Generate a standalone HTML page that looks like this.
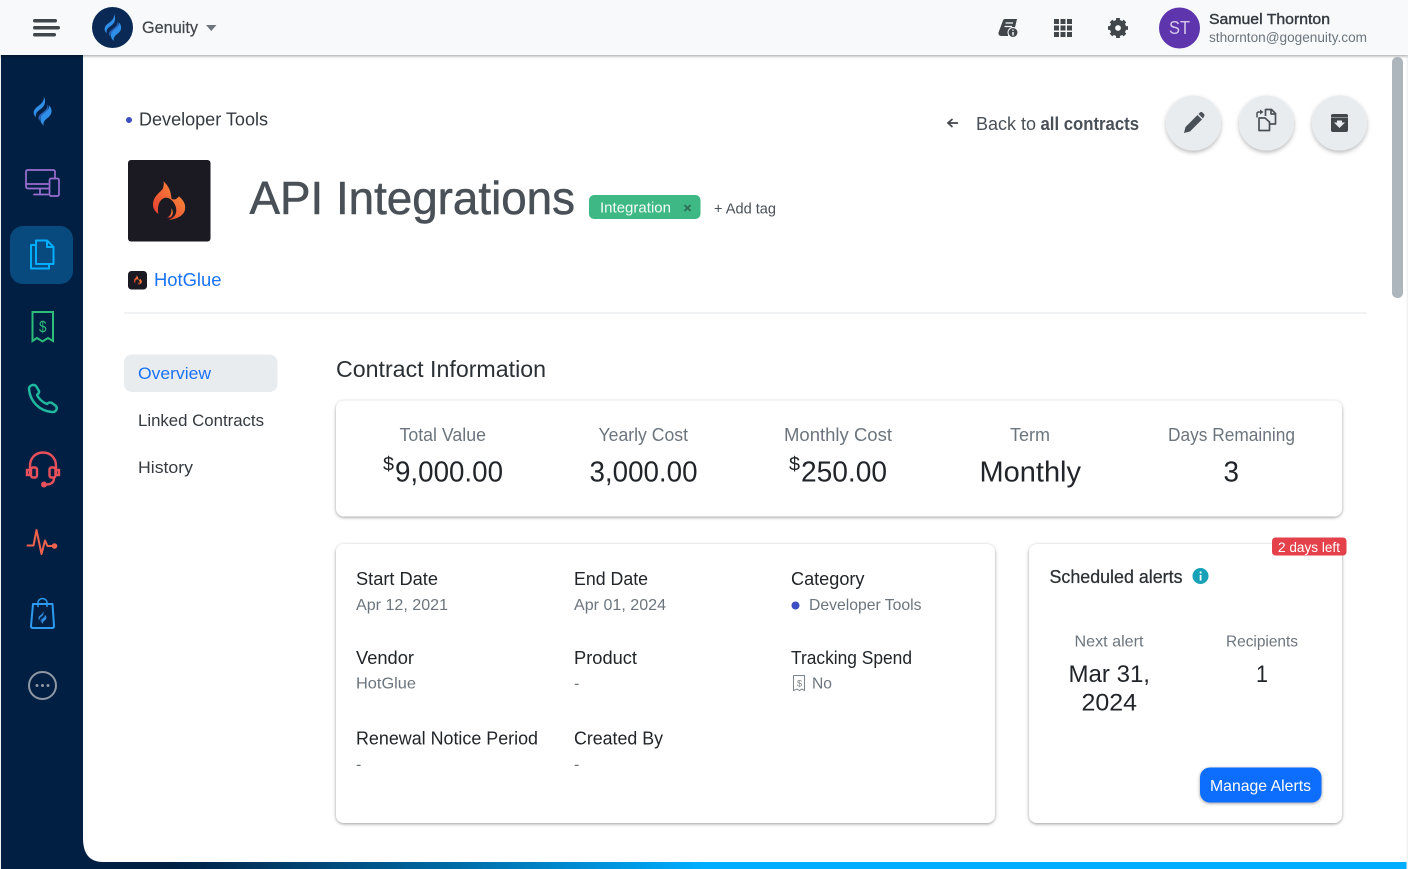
<!DOCTYPE html>
<html><head><meta charset="utf-8">
<style>
html,body{margin:0;padding:0;width:1408px;height:869px;overflow:hidden;background:#fff}
svg{position:absolute;left:0;top:0}
text{font-family:"Liberation Sans",sans-serif;fill:#212529}
.m{fill:#6c757d}
.d{fill:#495057}
</style></head>
<body>
<svg width="1408" height="869" viewBox="0 0 1408 869" xmlns="http://www.w3.org/2000/svg">
<defs>
<linearGradient id="bar" x1="0" x2="1" y1="0" y2="0"><stop offset="0" stop-color="#001f42"/><stop offset=".12" stop-color="#001f42"/><stop offset=".5" stop-color="#00aeff"/><stop offset="1" stop-color="#00aeff"/></linearGradient>
<linearGradient id="fire" x1="0" x2="1" y1="1" y2="0"><stop offset="0" stop-color="#e5352f"/><stop offset="1" stop-color="#ff9a3c"/></linearGradient>
<filter id="s1" x="-5%" y="-10%" width="110%" height="120%"><feDropShadow dx="0" dy="1.5" stdDeviation="1.2" flood-color="#000" flood-opacity=".3"/></filter>
<filter id="s2" x="-30%" y="-30%" width="160%" height="160%"><feDropShadow dx="0" dy="2" stdDeviation="2" flood-color="#000" flood-opacity=".28"/></filter>
<filter id="s3" x="-5%" y="-20%" width="110%" height="160%"><feDropShadow dx="0" dy="1" stdDeviation="1.5" flood-color="#000" flood-opacity=".4"/></filter>
<symbol id="fl" viewBox="0 0 20 30">
<path d="M14.500 8C16 12 12 15 8.500 17.500C5 20 4.500 23 7 25C6.500 21 10 19 13 16.500C16 14 16.500 10.500 14.500 8Z" fill="#2a5fb5"/>
<path d="M11 0C12 5 8 8 4 11C0 14-.5 18 3 21.500C2 17 5 15 8.500 12.500C12.500 9.500 13.500 4.500 11 0Z" fill="#2f8fe8"/>
<path d="M16 9C17.500 12.500 14 15.500 10.500 18C6.500 21 6.500 26.500 11 30C10 26.500 12 24.500 15 22C20.500 18 20 12 16 9Z" fill="#2f8fe8"/>
</symbol>
<symbol id="fire1" viewBox="0 0 34 40">
<path fill="url(#fire)" d="M10.700 0C16 5 18.500 10 19 18C21.500 20 24 19 26.700 15.700C31 19 34 24 33 29C32 35 26 39 16 40C21 38 24 35 24 30C24 24 19 17 13 17C7 18 4 25 5.500 34C1.500 31-.5 27 0 23C1 15 7 12 10 8C11 5 11.500 3 10.700 0Z"/>
<path fill="url(#fire)" d="M14.500 37.500C18 36 19.500 33 19 28C21 31 21 35 18 37.500Z"/>
</symbol>
</defs>

<!-- page shell -->
<rect x="0" y="0" width="1408" height="869" fill="#fff"/>
<rect x="1" y="55" width="120" height="814" fill="#001f42"/>
<rect x="0" y="855" width="1408" height="14" fill="url(#bar)"/>
<path d="M83 55H1408V862H103Q83 862 83 838Z" fill="#fff"/>
<rect x="0" y="0" width="1" height="869" fill="#eef0f2"/>
<rect x="1406.500" y="0" width="1.500" height="869" fill="#f1f2f3"/>
<rect x="0" y="0" width="1408" height="55" fill="#f8f9fa" filter="url(#s1)"/>

<!-- scrollbar -->
<rect x="1392" y="57" width="11" height="241" rx="5" fill="#adb5bd"/>

<!-- topbar -->
<rect x="33" y="19" width="24" height="3.500" rx="1.700" fill="#41464b"/>
<rect x="33" y="26" width="27" height="3.500" rx="1.700" fill="#41464b"/>
<rect x="33" y="33" width="23" height="3.500" rx="1.700" fill="#41464b"/>
<circle cx="112.500" cy="27.500" r="20.500" fill="#0a2a55"/>
<use href="#fl" x="104" y="14" width="18" height="27"/>
<text x="142" y="33" font-size="16.500" textLength="56" lengthAdjust="spacingAndGlyphs" stroke="#41464b" stroke-width=".2" style="fill:#41464b">Genuity</text>
<path d="M206 25H216.500L211.200 31Z" fill="#6c757d"/>

<path d="M1003 20.500Q1003.500 19 1005 19H1017L1014.500 29.500Q1010 29 1008 33.500V36H1001.500Q998 36 998.500 32.500Z" fill="#41464b"/>
<path d="M1005.500 23H1013M1004.500 26.500H1012" stroke="#f8f9fa" stroke-width="1.300"/>
<circle cx="1013" cy="32.500" r="5" fill="#41464b" stroke="#f8f9fa" stroke-width="1"/>
<path d="M1013 29.500V30.700M1013 32V35.500" stroke="#f8f9fa" stroke-width="1.500"/>

<g fill="#41464b">
<rect x="1054" y="19" width="5" height="5"/><rect x="1060.500" y="19" width="5" height="5"/><rect x="1067" y="19" width="5" height="5"/>
<rect x="1054" y="25.500" width="5" height="5"/><rect x="1060.500" y="25.500" width="5" height="5"/><rect x="1067" y="25.500" width="5" height="5"/>
<rect x="1054" y="32" width="5" height="5"/><rect x="1060.500" y="32" width="5" height="5"/><rect x="1067" y="32" width="5" height="5"/>
</g>
<g transform="translate(1118 28)">
<circle r="5.500" fill="none" stroke="#41464b" stroke-width="5.200"/>
<g stroke="#41464b" stroke-width="3.800">
<path d="M0-10V-7M0 7V10M-10 0H-7M7 0H10M-7-7L-5-5M5 5L7 7M7-7L5-5M-5 5L-7 7"/>
</g>
</g>
<circle cx="1179.500" cy="28" r="20.500" fill="#5f35ae"/>
<text x="1169" y="34" font-size="18" textLength="21" lengthAdjust="spacingAndGlyphs" style="fill:#d5caeb">ST</text>
<text x="1209" y="24" font-size="15" textLength="121" lengthAdjust="spacingAndGlyphs" stroke="#343a40" stroke-width=".4" style="fill:#343a40">Samuel Thornton</text>
<text x="1209" y="42" font-size="13.500" textLength="158" lengthAdjust="spacingAndGlyphs" class="m">sthornton@gogenuity.com</text>

<!-- sidebar icons -->
<use href="#fl" x="33" y="96" width="19.500" height="30"/>
<g fill="none" stroke="#9a6fd0" stroke-width="1.700" stroke-linejoin="round" stroke-linecap="round">
<path d="M49 188.500H28Q26 188.500 26 186.500V172Q26 170 28 170H53Q55 170 55 172V178"/>
<path d="M26 184H48M40 189V194M34 194.500H48"/>
<rect x="49.500" y="178.500" width="9.500" height="17.500" rx="1.500"/>
</g>
<rect x="10" y="226" width="63" height="58" rx="13" fill="#084a7e"/>
<g fill="none" stroke="#00aeff" stroke-width="2" stroke-linejoin="round">
<path d="M36 245H31V268.500H49V264"/>
<path d="M36 240.500H47L53.500 247V264H36Z"/>
<path d="M47 240.500V247H53.500"/>
</g>
<path d="M32.500 312V341L37 338L42.500 341.500L48 338L53 341V312H32.500Z" fill="none" stroke="#2dbd7a" stroke-width="2"/>
<text x="39" y="332" font-size="16" textLength="7.500" lengthAdjust="spacingAndGlyphs" style="fill:#2dbd7a">$</text>
<path d="M29 389C29 385 34 384 36 386L39 391C39.500 393 38 394 37 395C39 399 42 402 47 404C48.500 402.500 50 402 52 403L56 406C58 409 55.500 412.500 52 412C39 411 30 401 29 389Z" fill="none" stroke="#1fb8a0" stroke-width="2.500" stroke-linejoin="round"/>
<g fill="none" stroke="#e8505b" stroke-width="2.400" stroke-linecap="round">
<path d="M30 470V466C30 448 56 448 56 466V470"/>
<rect x="27" y="470" width="3" height="5"/>
<rect x="31" y="467.500" width="6" height="10" rx="2"/>
<rect x="49.500" y="467.500" width="6" height="10" rx="2"/>
<rect x="56" y="470" width="3" height="5"/>
<path d="M54 478Q54 484 47 484.500"/>
</g>
<circle cx="44" cy="484.500" r="3" fill="#e8505b"/>
<path d="M27.500 545.500H33.500L36.500 530L41.500 554L45 540.500L47.500 546H53" fill="none" stroke="#f0624d" stroke-width="2" stroke-linejoin="round" stroke-linecap="round"/>
<circle cx="54.500" cy="546" r="2.800" fill="#f0624d"/>
<path d="M33 604H52.500L54 626Q54 628 52 628H33Q31 628 31 626Z" fill="none" stroke="#2f9bf0" stroke-width="2" stroke-linejoin="round"/>
<path d="M38 607V603C38 597 47 597 47 603V607" fill="none" stroke="#2f9bf0" stroke-width="1.500"/>
<use href="#fl" x="38" y="611" width="9" height="13"/>
<circle cx="42.500" cy="685.500" r="13.500" fill="none" stroke="#8f98a3" stroke-width="2"/>
<g fill="#8f98a3"><circle cx="37" cy="685.500" r="1.500"/><circle cx="42.500" cy="685.500" r="1.500"/><circle cx="48" cy="685.500" r="1.500"/></g>

<!-- header -->
<circle cx="129" cy="120" r="3" fill="#3d4fc4"/>
<text x="139" y="125.500" font-size="18" textLength="129" lengthAdjust="spacingAndGlyphs" style="fill:#343a40">Developer Tools</text>
<path d="M958 123H948.500M952.500 119L948 123L952.500 127" fill="none" stroke="#41464b" stroke-width="1.700"/>
<text x="976" y="130" font-size="18" textLength="60" lengthAdjust="spacingAndGlyphs" class="d">Back to</text>
<text x="1040.500" y="130" font-size="18" font-weight="bold" textLength="98.500" lengthAdjust="spacingAndGlyphs" class="d">all contracts</text>
<g fill="#e9ecef" filter="url(#s2)">
<circle cx="1193.500" cy="123" r="27.500"/><circle cx="1266.500" cy="123" r="27.500"/><circle cx="1339.500" cy="123" r="27.500"/>
</g>
<path d="M1184 133L1185.500 127L1197.500 115L1202 119.500L1190 131.500Z" fill="#495057"/>
<path d="M1198.500 114L1200 112.500Q1201.300 111.500 1202.500 112.500L1204 114Q1205 115.200 1204 116.500L1203 118.500Z" fill="#495057"/>
<g fill="none" stroke="#495057" stroke-width="1.700" stroke-linejoin="round">
<path d="M1265.500 116V109.500H1271.500L1275.500 113.500V124H1270"/>
<path d="M1259 118H1265L1269.500 122V130.500H1259Z"/>
<path d="M1271 109.500V114H1275.500"/>
<path d="M1257 117.500V113.500Q1257 112 1259 112H1261" stroke-width="1.500"/>
</g>
<path d="M1260 109.500L1263.500 112L1260 114.500Z" fill="#495057"/>
<path d="M1331 116Q1331 114 1333 114H1346Q1348 114 1348 116V130Q1348 132 1346 132H1333Q1331 132 1331 130Z" fill="#41464b"/>
<path d="M1331 117.500H1348" stroke="#e9ecef" stroke-width=".8" opacity=".6"/>
<path d="M1334 122.500H1345L1339.500 128Z" fill="#e9ecef"/>
<path d="M1337 120.500H1342V123H1337Z" fill="#e9ecef"/>

<rect x="128" y="160" width="82.500" height="81.500" rx="3" fill="#1b1a22"/>
<use href="#fire1" x="153" y="181" width="33" height="39"/>
<text x="249.500" y="214" font-size="46" textLength="325.500" lengthAdjust="spacingAndGlyphs" stroke="#495057" stroke-width=".5" class="d">API Integrations</text>
<rect x="589" y="195" width="111.500" height="24" rx="5" fill="#3eb985"/>
<text x="600" y="212.500" font-size="14.500" textLength="71" lengthAdjust="spacingAndGlyphs" style="fill:#f3faf6">Integration</text>
<path d="M684.500 205L690.500 211M690.500 205L684.500 211" stroke="#2f6f55" stroke-width="1.800"/>
<text x="714" y="213.500" font-size="14.500" textLength="62" lengthAdjust="spacingAndGlyphs" class="d">+ Add tag</text>

<rect x="128" y="271" width="19" height="18.500" rx="3.500" fill="#1b1a22"/>
<use href="#fire1" x="134" y="275" width="8" height="10"/>
<text x="154" y="286" font-size="18" textLength="67.500" lengthAdjust="spacingAndGlyphs" style="fill:#1a73f5">HotGlue</text>
<rect x="124" y="312.500" width="1242.500" height="1" fill="#e2e5e8"/>

<!-- left nav -->
<rect x="124" y="354.500" width="153.500" height="37.500" rx="8" fill="#e9ecef"/>
<text x="138" y="379" font-size="17" textLength="73" lengthAdjust="spacingAndGlyphs" style="fill:#1a73f5">Overview</text>
<text x="138" y="426" font-size="17" textLength="126" lengthAdjust="spacingAndGlyphs" style="fill:#343a40">Linked Contracts</text>
<text x="138" y="473" font-size="17" textLength="55" lengthAdjust="spacingAndGlyphs" style="fill:#343a40">History</text>

<text x="336" y="377" font-size="23" textLength="210" lengthAdjust="spacingAndGlyphs" style="fill:#2b3035">Contract Information</text>

<!-- summary card -->
<rect x="336" y="400.500" width="1006" height="116" rx="8" fill="#fff" filter="url(#s3)"/>
<g font-size="18">
<text x="399.500" y="441" textLength="86.500" lengthAdjust="spacingAndGlyphs" class="m">Total Value</text>
<text x="598.500" y="441" textLength="89.500" lengthAdjust="spacingAndGlyphs" class="m">Yearly Cost</text>
<text x="784" y="441" textLength="108" lengthAdjust="spacingAndGlyphs" class="m">Monthly Cost</text>
<text x="1010" y="441" textLength="40" lengthAdjust="spacingAndGlyphs" class="m">Term</text>
<text x="1168" y="441" textLength="127" lengthAdjust="spacingAndGlyphs" class="m">Days Remaining</text>
</g>
<g font-size="29">
<text x="383" y="470.500" style="font-size:19px" textLength="11" lengthAdjust="spacingAndGlyphs">$</text>
<text x="395" y="481.500" textLength="108" lengthAdjust="spacingAndGlyphs">9,000.00</text>
<text x="589.500" y="481.500" textLength="108" lengthAdjust="spacingAndGlyphs">3,000.00</text>
<text x="789" y="470.500" style="font-size:19px" textLength="11" lengthAdjust="spacingAndGlyphs">$</text>
<text x="801" y="481.500" textLength="86" lengthAdjust="spacingAndGlyphs">250.00</text>
<text x="979.500" y="481.500" textLength="101.500" lengthAdjust="spacingAndGlyphs">Monthly</text>
<text x="1223.500" y="481.500" textLength="15.500" lengthAdjust="spacingAndGlyphs">3</text>
</g>

<!-- details card -->
<rect x="336" y="544" width="659" height="279" rx="8" fill="#fff" filter="url(#s3)"/>
<g font-size="18.500" style="fill:#343a40">
<text x="356" y="585" textLength="82" lengthAdjust="spacingAndGlyphs">Start Date</text>
<text x="574" y="585" textLength="74" lengthAdjust="spacingAndGlyphs">End Date</text>
<text x="791" y="585" textLength="73.500" lengthAdjust="spacingAndGlyphs">Category</text>
<text x="356" y="664" textLength="58" lengthAdjust="spacingAndGlyphs">Vendor</text>
<text x="574" y="664" textLength="63" lengthAdjust="spacingAndGlyphs">Product</text>
<text x="791" y="664" textLength="121" lengthAdjust="spacingAndGlyphs">Tracking Spend</text>
<text x="356" y="744.500" textLength="182" lengthAdjust="spacingAndGlyphs">Renewal Notice Period</text>
<text x="574" y="744.500" textLength="89" lengthAdjust="spacingAndGlyphs">Created By</text>
</g>
<g font-size="16">
<text x="356" y="610" textLength="92" lengthAdjust="spacingAndGlyphs" class="m">Apr 12, 2021</text>
<text x="574" y="610" textLength="92" lengthAdjust="spacingAndGlyphs" class="m">Apr 01, 2024</text>
<text x="809" y="610" textLength="112.500" lengthAdjust="spacingAndGlyphs" class="m">Developer Tools</text>
<text x="356" y="688.500" textLength="60" lengthAdjust="spacingAndGlyphs" class="m">HotGlue</text>
<text x="574" y="688.500" class="m">-</text>
<text x="812" y="688.500" textLength="20" lengthAdjust="spacingAndGlyphs" class="m">No</text>
<text x="356" y="769.500" class="m">-</text>
<text x="574" y="769.500" class="m">-</text>
</g>
<circle cx="795.500" cy="605.500" r="4" fill="#3d4fc4"/>
<path d="M793.500 675.500H804.500V690.500L802 689L799.500 690.500L797 689L793.500 690.500Z" fill="none" stroke="#7d858c" stroke-width="1"/>
<text x="797" y="686.500" style="font-size:9px;fill:#7d858c">$</text>

<!-- alerts card -->
<rect x="1029" y="544" width="313" height="279" rx="8" fill="#fff" filter="url(#s3)"/>
<rect x="1272" y="537.500" width="74.500" height="18" rx="3.500" fill="#e5414b"/>
<text x="1278" y="552" font-size="13.500" textLength="62" lengthAdjust="spacingAndGlyphs" style="fill:#fff">2 days left</text>
<text x="1049.500" y="583" font-size="18" textLength="133" lengthAdjust="spacingAndGlyphs" stroke="#2b3035" stroke-width=".25" style="fill:#2b3035">Scheduled alerts</text>
<circle cx="1200.500" cy="576" r="8" fill="#17a2b8"/>
<rect x="1199.700" y="575" width="1.800" height="5.500" fill="#fff"/><rect x="1199.700" y="571.500" width="1.800" height="2" fill="#fff"/>
<text x="1074.500" y="646.500" font-size="16" textLength="69" lengthAdjust="spacingAndGlyphs" class="m">Next alert</text>
<text x="1226" y="646.500" font-size="16" textLength="72" lengthAdjust="spacingAndGlyphs" class="m">Recipients</text>
<text x="1068.500" y="682" font-size="24" textLength="81.500" lengthAdjust="spacingAndGlyphs">Mar 31,</text>
<text x="1081.500" y="710.500" font-size="24" textLength="55.500" lengthAdjust="spacingAndGlyphs">2024</text>
<text x="1256" y="682" font-size="24" textLength="12" lengthAdjust="spacingAndGlyphs">1</text>
<rect x="1200" y="767.500" width="121.500" height="35" rx="10" fill="#0d6efd" filter="url(#s3)"/>
<text x="1210" y="791" font-size="16" textLength="101" lengthAdjust="spacingAndGlyphs" style="fill:#fff">Manage Alerts</text>
</svg>
</body></html>
